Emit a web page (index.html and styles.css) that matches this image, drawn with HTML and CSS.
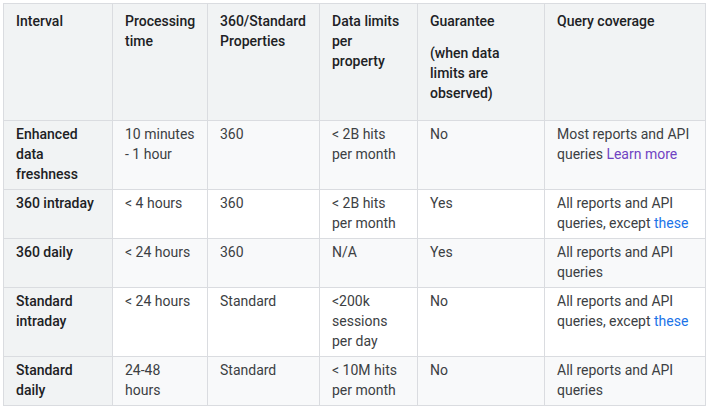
FILE: index.html
```html
<!DOCTYPE html>
<html lang="en">
<head>
<meta charset="utf-8">
<title>Data freshness</title>
<link rel="stylesheet" href="styles.css">
</head>
<body>
<table class="fresh">
  <colgroup>
    <col class="c1"><col class="c2"><col class="c3"><col class="c4"><col class="c5"><col class="c6">
  </colgroup>
  <thead>
    <tr>
      <th>Interval</th>
      <th>Processing time</th>
      <th><span class="nw">360/Standard</span> Properties</th>
      <th>Data limits per property</th>
      <th>Guarantee<p class="sub">(when data limits are observed)</p></th>
      <th>Query coverage</th>
    </tr>
  </thead>
  <tbody>
    <tr>
      <th scope="row">Enhanced data freshness</th>
      <td>10 minutes - 1 hour</td>
      <td>360</td>
      <td>&lt; 2B hits per month</td>
      <td>No</td>
      <td>Most reports and API queries <a class="visited" href="#">Learn more</a></td>
    </tr>
    <tr>
      <th scope="row">360 intraday</th>
      <td>&lt; 4 hours</td>
      <td>360</td>
      <td>&lt; 2B hits per month</td>
      <td>Yes</td>
      <td>All reports and API queries, except <a href="#">these</a></td>
    </tr>
    <tr>
      <th scope="row">360 daily</th>
      <td>&lt; 24 hours</td>
      <td>360</td>
      <td>N/A</td>
      <td>Yes</td>
      <td>All reports and API queries</td>
    </tr>
    <tr>
      <th scope="row">Standard intraday</th>
      <td>&lt; 24 hours</td>
      <td>Standard</td>
      <td>&lt;200k sessions per day</td>
      <td>No</td>
      <td>All reports and API queries, except <a href="#">these</a></td>
    </tr>
    <tr>
      <th scope="row">Standard daily</th>
      <td>24-48 hours</td>
      <td>Standard</td>
      <td>&lt; 10M hits per month</td>
      <td>No</td>
      <td>All reports and API queries</td>
    </tr>
  </tbody>
</table>
</body>
</html>
```

FILE: styles.css
```css
html, body {
  margin: 0;
  background: #ffffff;
}
body {
  padding: 3px;
  font-family: Roboto, "Liberation Sans", Arial, sans-serif;
  font-size: 14px;
  line-height: 20px;
  color: #3c4043;
}
.fresh {
  border-collapse: collapse;
  table-layout: fixed;
  width: 702px;
  border: 1px solid #dadce0;
}
.c1 { width: 109px; }
.c2 { width: 95px; }
.c3 { width: 112px; }
.c4 { width: 98px; }
.c5 { width: 127px; }
.c6 { width: 161px; }
.fresh th,
.fresh td {
  border: 1px solid #dadce0;
  vertical-align: top;
  text-align: left;
  padding: 3px 12px 5px 12px;
}
.fresh th {
  font-weight: 500;
  color: #202124;
  background: #f1f3f4;
}
.fresh thead th {
  padding: 7px 12px 17px 12px;
}
.fresh tbody tr:nth-child(odd) td {
  background: #f8f9fa;
}
.fresh tbody tr:nth-child(even) td {
  background: #ffffff;
}
.sub {
  margin: 12px 0 0 0;
}
.nw {
  white-space: nowrap;
}
a {
  color: #1a73e8;
  text-decoration: none;
}
a.visited {
  color: #7043c2;
}
```
